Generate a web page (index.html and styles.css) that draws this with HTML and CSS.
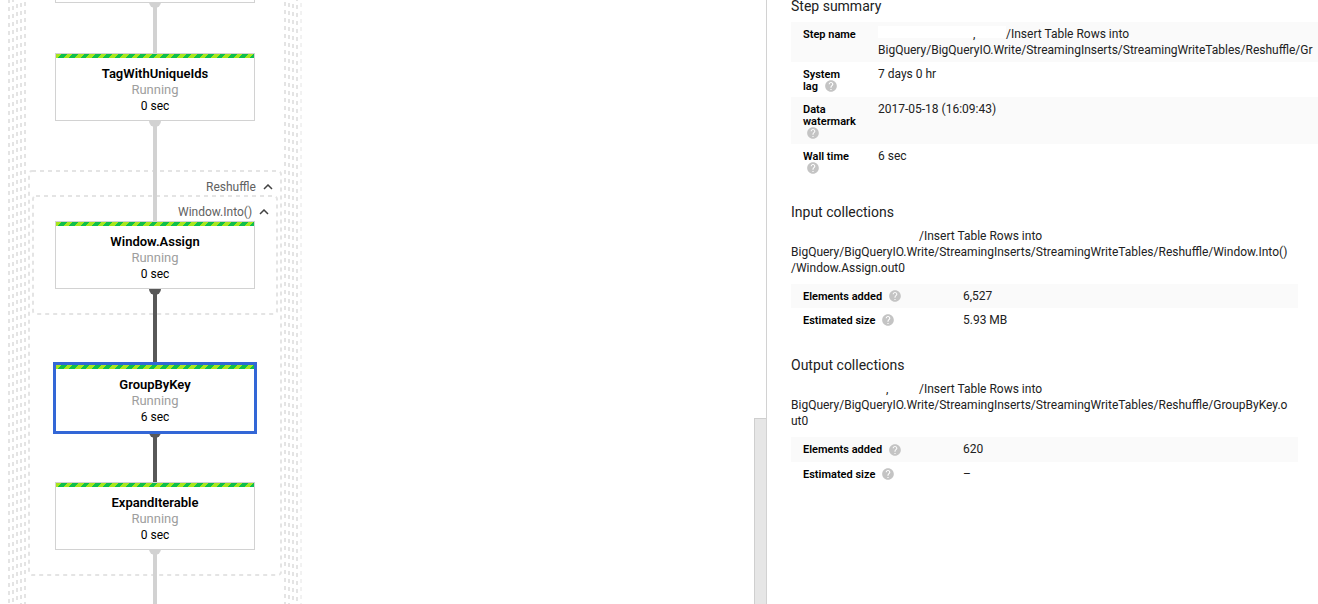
FILE: index.html
```html
<!DOCTYPE html>
<html lang="en">
<head>
    <meta charset="UTF-8">
    <meta name="viewport" content="width=device-width, initial-scale=1.0">
    <title>Dataflow job</title>
    <link rel="stylesheet" href="styles.css">
</head>
<body>
    <svg class="defs" width="0" height="0">
        <symbol id="help" viewBox="0 0 24 24">
            <path d="M12 2C6.48 2 2 6.48 2 12s4.480 10 10 10 10-4.480 10-10S17.520 2 12 2zm1 17h-2v-2h2v2zm2.070-7.750l-.9.920C13.450 12.900 13 13.500 13 15h-2v-.5c0-1.100.450-2.100 1.170-2.830l1.240-1.260c.370-.360.590-.860.590-1.410 0-1.100-.9-2-2-2s-2 .9-2 2H8c0-2.210 1.790-4 4-4s4 1.790 4 4c0 .880-.360 1.680-.930 2.250z"/>
        </symbol>
    </svg>
    <main class="layout">
        <section class="graph">
            <svg class="wires" width="310" height="640">
                <!-- enclosing groups -->
                <g class="frames">
                    <path d="M9 -1V640M13 -2V640M17 -4V640M21 -5V640M25 -6V640"/>
                    <path d="M285 -6V640M289 -5V640M293 -4V640M297 -3V640"/>
                    <path class="thin" d="M301 -5V640"/>
                    <rect x="29" y="171" width="252" height="404" rx="3"/>
                    <rect x="33" y="196" width="244" height="118" rx="3"/>
                </g>
                <!-- edges -->
                <g class="edge">
                    <path d="M155 2V54M155 121V222M155 549V640"/>
                    <circle cx="155" cy="2" r="6"/>
                    <circle cx="155" cy="121" r="6"/>
                    <circle cx="155" cy="549" r="6"/>
                </g>
                <g class="edge active">
                    <path d="M155 289V364M155 432V483"/>
                    <circle cx="155" cy="289" r="6"/>
                    <circle cx="155" cy="432" r="6"/>
                </g>
            </svg>
            <button class="toggle reshuffle">Reshuffle <svg width="10" height="6" viewBox="0 0 10 6"><path d="M1 5l4-4 4 4"/></svg></button>
            <button class="toggle window-into">Window.Into() <svg width="10" height="6" viewBox="0 0 10 6"><path d="M1 5l4-4 4 4"/></svg></button>
            <div class="node previous"></div>
            <div class="node tag">
                <h3>TagWithUniqueIds</h3>
                <p class="state">Running</p>
                <p>0 sec</p>
            </div>
            <div class="node assign">
                <h3>Window.Assign</h3>
                <p class="state">Running</p>
                <p>0 sec</p>
            </div>
            <div class="node group selected">
                <h3>GroupByKey</h3>
                <p class="state">Running</p>
                <p>6 sec</p>
            </div>
            <div class="node expand">
                <h3>ExpandIterable</h3>
                <p class="state">Running</p>
                <p>0 sec</p>
            </div>
            <div class="scroll-thumb"></div>
        </section>
        <aside class="panel">
            <h2>Step summary</h2>
            <table class="summary">
                <tr>
                    <th>Step name</th>
                    <td><span class="hidden-name">,</span>/Insert Table Rows into<br>BigQuery/BigQueryIO.Write/StreamingInserts/StreamingWriteTables/Reshuffle/Gr</td>
                </tr>
                <tr>
                    <th>System<br>lag <svg class="help"><use href="#help"/></svg></th>
                    <td>7 days 0 hr</td>
                </tr>
                <tr>
                    <th>Data watermark <svg class="help"><use href="#help"/></svg></th>
                    <td>2017-05-18 (16:09:43)</td>
                </tr>
                <tr>
                    <th>Wall time <svg class="help"><use href="#help"/></svg></th>
                    <td>6 sec</td>
                </tr>
            </table>

            <h2>Input collections</h2>
            <p class="path"><span class="hidden-name"></span>/Insert Table Rows into<br>BigQuery/BigQueryIO.Write/StreamingInserts/StreamingWriteTables/Reshuffle/Window.Into()<wbr>/Window.Assign.out0</p>
            <table class="stats">
                <tr>
                    <th>Elements added <svg class="help"><use href="#help"/></svg></th>
                    <td>6,527</td>
                </tr>
                <tr>
                    <th>Estimated size <svg class="help"><use href="#help"/></svg></th>
                    <td>5.93 MB</td>
                </tr>
            </table>

            <h2>Output collections</h2>
            <p class="path"><span class="hidden-name">,</span>/Insert Table Rows into<br>BigQuery/BigQueryIO.Write/StreamingInserts/StreamingWriteTables/Reshuffle/GroupByKey.o<wbr>ut0</p>
            <table class="stats">
                <tr>
                    <th>Elements added <svg class="help"><use href="#help"/></svg></th>
                    <td>620</td>
                </tr>
                <tr>
                    <th>Estimated size <svg class="help"><use href="#help"/></svg></th>
                    <td>–</td>
                </tr>
            </table>
        </aside>
    </main>
</body>
</html>
```
FILE: styles.css
```css
* {
    box-sizing: border-box;
}
body {
    margin: 0;
    overflow: hidden;
    background-color: #fff;
    color: #212121;
    font-family: Roboto, sans-serif;
    font-size: 12px;
    line-height: 16px;
}
h2, h3, p {
    margin: 0;
}
.defs {
    position: absolute;
}
.layout {
    display: flex;
    height: 100vh;
}

/* graph canvas */
.graph {
    position: relative;
    flex: 1;
    overflow: hidden;
}
.wires {
    display: block;
}
.frames {
    fill: none;
    stroke: #e4e4e4;
    stroke-width: 2;
    stroke-dasharray: 4 4;
}
.frames .thin {
    stroke-width: 1;
}
.edge {
    fill: #d2d2d2;
}
.edge path {
    stroke: #d2d2d2;
    stroke-width: 4;
}
.edge.active {
    fill: #585858;
}
.edge.active path {
    stroke: #585858;
}
.node {
    position: absolute;
    left: 55px;
    width: 200px;
    height: 68px;
    padding-top: 12px;
    background-color: #fff;
    border: 1px solid #d2d2d2;
    color: #000;
    text-align: center;
}
.node::before {
    content: '';
    position: absolute;
    top: 0;
    left: 0;
    right: 0;
    height: 4px;
    background: repeating-linear-gradient(135deg, #a8e61d 0 4px, #0fbf4c 4px 8px);
}
.node h3 {
    font-size: 13px;
    font-weight: 600;
    line-height: 16px;
}
.node .state {
    color: #9e9e9e;
    font-size: 13px;
}
.node.selected {
    outline: 3px solid #3367d6;
    outline-offset: -1px;
}
.previous {
    top: -65px;
}
.tag {
    top: 53px;
}
.assign {
    top: 221px;
}
.group {
    top: 364px;
}
.expand {
    top: 482px;
}
.toggle {
    position: absolute;
    display: flex;
    align-items: center;
    gap: 7px;
    padding: 0;
    border: none;
    background: none;
    color: #616161;
    font: inherit;
    cursor: pointer;
}
.toggle svg {
    fill: none;
    stroke: #424242;
    stroke-width: 1.5;
}
.reshuffle {
    left: 206px;
    top: 179px;
}
.window-into {
    left: 178px;
    top: 204px;
}
.scroll-thumb {
    position: absolute;
    top: 418px;
    right: 0;
    bottom: 0;
    width: 12px;
    background-color: #e6e6e6;
    border: 1px solid #cfcfcf;
    border-width: 1px 0 0 1px;
}

/* details panel */
.panel {
    width: 552px;
    padding-left: 24px;
    border-left: 1px solid #d2d2d2;
    overflow: hidden;
}
.panel h2 {
    margin-bottom: 8px;
    font-size: 14px;
    font-weight: 400;
}
.panel h2:first-child {
    margin-bottom: 10px;
    line-height: 12px;
}
.panel table + h2 {
    margin-top: 25px;
}
table {
    border-collapse: collapse;
}
tr:nth-child(odd) {
    background-color: #fafafa;
}
th, td {
    padding: 4px 12px;
    text-align: left;
    vertical-align: top;
}
th {
    color: #000;
    font-size: 11px;
    font-weight: 600;
    line-height: 12px;
}
.summary {
    width: 100%;
}
.summary th {
    width: 75px;
    padding: 7px 8px 4px 12px;
}
.summary td {
    padding-right: 0;
}
.stats {
    width: calc(100% - 20px);
}
.stats th {
    width: 160px;
    padding-top: 7px;
    padding-bottom: 5px;
}
.help {
    width: 14px;
    height: 14px;
    margin: -2px 0 0 3px;
    vertical-align: middle;
    fill: #c4c4c4;
}
.path {
    margin-right: 20px;
    margin-bottom: 8px;
}
.hidden-name {
    display: inline-block;
    width: 128px;
    height: 16px;
    padding-left: 95px;
    vertical-align: top;
}
.summary .hidden-name {
    background: linear-gradient(#fff, #fff) 0 0 / 100% 12px no-repeat;
}
```
